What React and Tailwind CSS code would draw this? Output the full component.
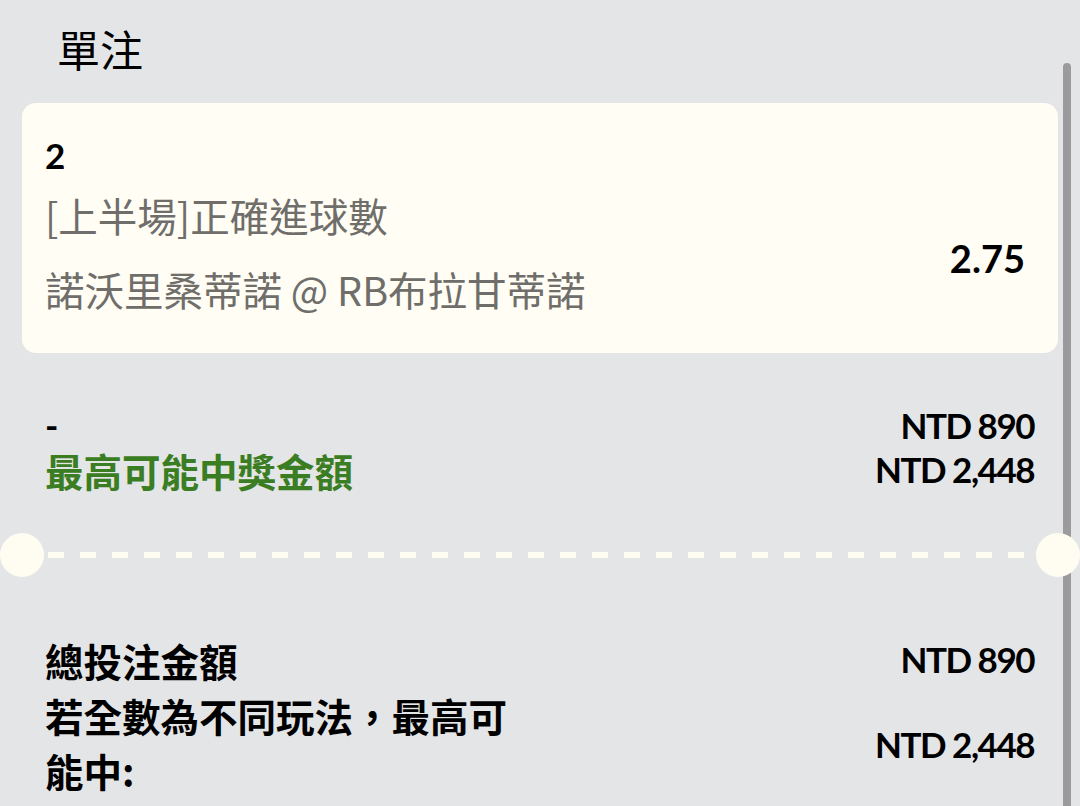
import React from "react";

const font = "font-['Lato','Noto_Sans_CJK_TC',sans-serif]";
const cjk = "font-['Noto_Sans_CJK_TC',sans-serif]";

const Dot = () => (
  <div className="w-[44px] h-[44px] rounded-full bg-[#fffdf2] shrink-0" />
);

export default function App() {
  return (
    <div className={`relative w-[1080px] h-[806px] overflow-hidden bg-[#e4e5e7] text-black ${font}`}>
      {/* scrollbar */}
      <div className="absolute left-[1063px] top-[63px] w-[8px] h-[760px] rounded-full bg-[#9b9b9d]" />

      <div className="relative">
        <h1 className={`pl-[57px] pt-[20px] text-[43px] leading-[56px] font-normal ${cjk}`}>
          單注
        </h1>

        <div className="mx-[22px] mt-[27px] h-[250px] rounded-[14px] bg-[#fffdf4] pl-[23px] pr-[33px] flex justify-between">
          <div className="flex flex-col pt-[30px]">
            <div className="text-[35px] leading-[44px] font-bold">2</div>
            <div className={`text-[39.5px] leading-[52px] mt-[12px] text-[#6f6e6a] ${cjk}`}>
              [上半場]正確進球數
            </div>
            <div className={`text-[39.5px] leading-[52px] mt-[22px] text-[#6f6e6a] ${cjk}`}>
              諾沃里桑蒂諾 @ RB布拉甘蒂諾
            </div>
          </div>
          <div className="pt-[136px] text-[38px] font-bold leading-[38px]">2.75</div>
        </div>

        <div className="mt-[50px] pl-[45px] pr-[46px] flex justify-between items-start">
          <div className="flex flex-col">
            <div className="text-[36px] leading-[44px] font-bold">-</div>
            <div className={`text-[38.5px] leading-[46px] font-bold text-[#3a7d22] ${cjk}`}>
              最高可能中獎金額
            </div>
          </div>
          <div className="flex flex-col items-end text-[35px] leading-[44px] font-bold tracking-[-1.5px]">
            <div>NTD 890</div>
            <div>NTD 2,448</div>
          </div>
        </div>

        <div className="mt-[40px] flex items-center">
          <Dot />
          <div className="flex-1 mx-[4px] h-[6px] bg-[repeating-linear-gradient(90deg,#fffdf2_0_16px,transparent_16px_32px)]" />
          <Dot />
        </div>

        <div className="mt-[56px] pl-[45px] pr-[46px] flex justify-between">
          <div className={`flex flex-col text-[38.5px] leading-[55px] font-bold ${cjk}`}>
            <div>總投注金額</div>
            <div className="w-[470px]">若全數為不同玩法，最高可能中:</div>
          </div>
          <div className="flex flex-col items-end text-[35px] leading-[44px] font-bold tracking-[-1.5px]">
            <div className="mt-[4px]">NTD 890</div>
            <div className="mt-[41px]">NTD 2,448</div>
          </div>
        </div>
      </div>
    </div>
  );
}
